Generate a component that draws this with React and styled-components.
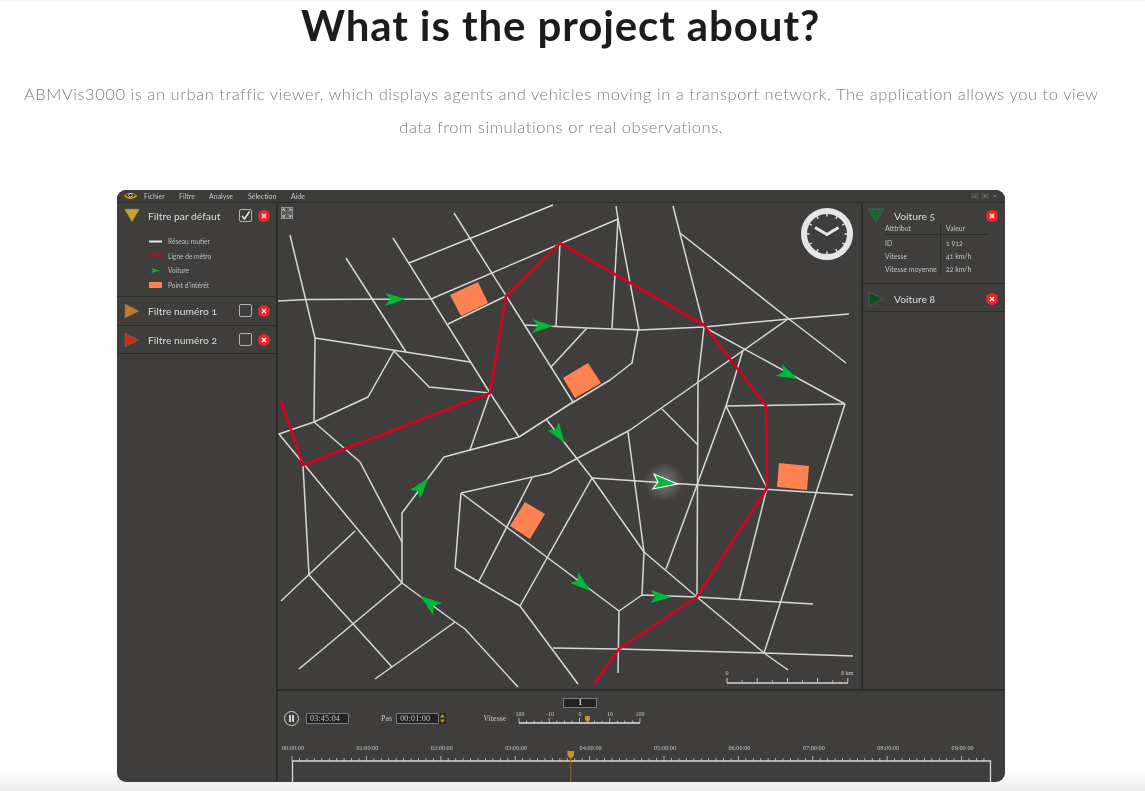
import React from 'react';
import styled, { createGlobalStyle } from 'styled-components';

const GlobalStyle = createGlobalStyle`
  html, body {
    margin: 0;
    padding: 0;
    background: #fff;
    overflow: hidden;
  }
`;

const ROADS = [
  'M278 301 L306 299.5 L431 299 L618 219',
  'M290 235 L315 338 L314 422',
  'M315 338 L470 362',
  'M346 258 L406 352',
  'M393 238 L490 393 L519 437',
  'M409 263 L553 205',
  'M454 213 L573 402',
  'M448 324 L506 296',
  'M394 351 L368 397 L314 422 L279 434 L402 583',
  'M394 351 L429 387 L490 393',
  'M314 422 L360 462 L402 542',
  'M490 393 L470 450',
  'M402 583 L402 513 L444 457 L519 437 L573 402',
  'M303 465 L309 575',
  'M281 601 L355 531',
  'M309 575 L392 667',
  'M299 669 L402 583',
  'M375 679 L455 622',
  'M402 583 L455 622 L465 629 L518 687',
  'M461 493 L550 473 L630 430 L660 409 L788 319',
  'M572 403 L610 380 L632 363 L638 330',
  'M461 493 L455 568 L520 606',
  'M461 493 L619 611',
  'M532 478 L479 581',
  'M592 478 L520 606',
  'M520 606 L578 684',
  'M553 648 L618 649 L764 653 L853 656',
  'M546 419 L592 478 L644 552 L697 597 L764 653 L788 670',
  'M592 478 L853 495',
  'M628 432 L644 552 L642 595 L619 611 L618 673',
  'M642 595 L697 597 L813 604',
  'M666 569 L697 485 L726 406 L743 350',
  'M697 597 L698 380 L704 327',
  'M662 409 L698 445',
  'M673 206 L704 327',
  'M680 233 L789 319 L846 363',
  'M525 325 L587 328 L639 330 L704 327 L789 319 L849 314',
  'M560 243 L556 326',
  'M616 206 L618 219 L639 330',
  'M618 219 L612 328',
  'M704 327 L845 404',
  'M726 406 L845 404',
  'M726 406 L767 488',
  'M845 404 L764 653',
  'M767 488 L739 600',
  'M587 328 L551 367',
];

const METRO = 'M281 401 L303 465 L490 393 L506 296 L560 243 L704 325 L766 406 L767 488 L697 597 L619 649 L594 684';

const SPOTS = [
  '450,295 478,282 488,303 461,316',
  '588,363 601,383 575,398 563,378',
  '525,502 545,514 530,539 510,526',
  '779,463 809,466 807,490 777,487',
];

const CARS = [
  '406,299 385,293 390,299 385,306',
  '553.7,326 532,319 538,326 532,333',
  '564.7,443 558.7,422 555.7,429.8 547.7,430',
  '797.7,379 782,364 783,372 776,376',
  '428.7,478 409.7,490 417.9,490.9 420,499',
  '420.3,596 442,603 433.7,606.1 433,615',
  '590.7,591 578,572 577.7,580.5 570,583',
  '671.7,597 650.7,590 655,597 650.7,603',
];

const TIMES = ['00:00:00', '01:00:00', '02:00:00', '03:00:00', '04:00:00', '05:00:00', '06:00:00', '07:00:00', '08:00:00', '09:00:00'];

const Page = styled.div`
  width: 1145px;
  height: 791px;
  overflow: hidden;
  background: linear-gradient(to bottom, #f4f4f4 0, #fff 3px, #fff 771px, #ebebeb 791px);
`;

const Section = styled.section`
  width: 1122px;
  display: flex;
  flex-direction: column;
  align-items: center;
`;

const Heading = styled.h1`
  margin: 0;
  height: 51px;
  font-family: 'Lato', sans-serif;
  font-weight: 700;
  font-size: 42px;
  line-height: 51px;
  letter-spacing: 0.9px;
  color: #1c1c1c;
  white-space: nowrap;
  will-change: transform;
`;

const Intro = styled.p`
  margin: 27px 0 46px;
  font-family: 'Lato', sans-serif;
  font-weight: 300;
  font-size: 16.5px;
  line-height: 33px;
  letter-spacing: 0.55px;
  color: #7c7c7c;
  text-align: center;
  white-space: nowrap;
  will-change: transform;
`;

const Window = styled.div`
  width: 888px;
  height: 592px;
  flex-shrink: 0;
  display: grid;
  grid-template-columns: 161px 1fr;
  grid-template-rows: 13px 1fr;
  background: #3f3e3d;
  border-radius: 9px;
  overflow: hidden;
  font-family: 'Lato', sans-serif;
`;

const MenuBar = styled.div`
  grid-column: 1 / 3;
  display: flex;
  align-items: center;
  background: #3c3b3a;
  border-bottom: 1px solid #2c2c2b;
  padding-left: 6px;
  will-change: transform;
`;

const MenuItem = styled.span`
  width: ${(p) => p.$width}px;
  font-size: 7px;
  color: #c4c4c4;
  white-space: nowrap;
`;

const WindowButtons = styled.div`
  margin-left: auto;
  margin-right: 6px;
  display: flex;
  gap: 2px;
`;

const WindowButton = styled.span`
  width: 8px;
  height: 6px;
  background: ${(p) => (p.$plain ? 'transparent' : '#4c4b4a')};
  color: #a0a0a0;
  font-size: 6px;
  line-height: 6px;
  text-align: center;
`;

const Sidebar = styled.aside`
  border-right: 2px solid #2c2c2b;
  will-change: transform;
`;

const FilterRow = styled.div`
  border-bottom: 1px solid #2c2c2b;
  padding: ${(p) => p.$top || 6}px 6px 0 7px;
  height: ${(p) => p.$height}px;
  box-sizing: border-box;
`;

const RowHead = styled.div`
  display: flex;
  align-items: center;
  height: 15px;
`;

const RowTitle = styled.span`
  margin-left: ${(p) => p.$gap}px;
  font-size: 10.3px;
  font-variant-numeric: oldstyle-nums;
  color: #dcdcdc;
  white-space: nowrap;
`;

const CheckBox = styled.span`
  margin-left: auto;
  width: 13px;
  height: 13px;
  border: 1px solid #b4b4b4;
  border-radius: 2px;
  box-sizing: border-box;
  display: flex;
  align-items: center;
  justify-content: center;
`;

const CloseDot = styled.span`
  margin-left: ${(p) => (p.$push ? 'auto' : '6px')};
  width: 12px;
  height: 12px;
  border-radius: 50%;
  background: #f2242b;
  flex-shrink: 0;
  display: flex;
  align-items: center;
  justify-content: center;
`;

const Legend = styled.ul`
  list-style: none;
  margin: 11px 0 0 25px;
  padding: 0;
  display: grid;
  grid-auto-rows: 14.5px;
`;

const LegendItem = styled.li`
  display: flex;
  align-items: center;
  gap: 6px;
  font-size: 6.6px;
  color: #bdbdbd;
`;

const Swatch = styled.span`
  width: 13px;
  display: flex;
  align-items: center;
  justify-content: center;
`;

const Stage = styled.div`
  display: flex;
  flex-direction: column;
  min-width: 0;
`;

const TopArea = styled.div`
  display: grid;
  grid-template-columns: 583px 1fr;
  height: 486px;
  border-bottom: 2px solid #2c2c2b;
`;

const MapSvg = styled.svg`
  display: block;
  width: 583px;
  height: 486px;
`;

const Details = styled.aside`
  border-left: 2px solid #2c2c2b;
  will-change: transform;
`;

const VehicleRow = styled.div`
  border-bottom: 1px solid #2c2c2b;
  height: ${(p) => p.$height}px;
  box-sizing: border-box;
  padding: ${(p) => p.$top}px 7px 0 5px;
`;

const AttrTable = styled.div`
  display: grid;
  grid-template-columns: 55px 48px;
  margin: 1px 0 0 17px;
  font-size: 6.9px;
  font-variant-numeric: oldstyle-nums;
  color: #c4c4c4;
`;

const AttrCell = styled.div`
  height: ${(p) => (p.$head ? 10 : 13)}px;
  line-height: ${(p) => (p.$head ? 9 : 16)}px;
  padding-left: ${(p) => (p.$value ? 5 : 0)}px;
  border-left: ${(p) => (p.$value ? '1px solid #2c2c2b' : 'none')};
  border-bottom: ${(p) => (p.$head ? '1px solid #2c2c2b' : 'none')};
  white-space: nowrap;
`;

const Controls = styled.div`
  flex: 1;
  display: flex;
  flex-direction: column;
  font-family: 'Liberation Serif', serif;
  color: #c9c9c9;
  will-change: transform;
`;

const PlayRow = styled.div`
  display: flex;
  align-items: flex-start;
  padding: 7px 0 0 6px;
  height: 52px;
  box-sizing: border-box;
`;

const PauseButton = styled.span`
  width: 15px;
  height: 15px;
  margin-top: 13px;
  border: 1.5px solid #cfcfcf;
  border-radius: 50%;
  box-sizing: border-box;
  display: flex;
  align-items: center;
  justify-content: center;
  gap: 1.5px;
`;

const PauseBar = styled.span`
  width: 2px;
  height: 7px;
  background: #cfcfcf;
`;

const TimeBox = styled.span`
  margin-top: 15px;
  margin-left: ${(p) => p.$left}px;
  width: ${(p) => p.$width}px;
  height: 11px;
  border: 1px solid #7c7c7c;
  border-radius: 1px;
  box-sizing: border-box;
  background: #222222;
  font-size: 8px;
  line-height: 9px;
  padding-left: 3px;
  color: #c9c9c9;
  letter-spacing: 0.2px;
`;

const FieldLabel = styled.span`
  margin-top: 15px;
  margin-left: ${(p) => p.$left}px;
  font-size: 8px;
  line-height: 11px;
  color: #c9c9c9;
`;

const Stepper = styled.svg`
  margin-top: 15px;
  display: block;
`;

const SpeedBlock = styled.div`
  margin-left: 12px;
  width: 134px;
  display: flex;
  flex-direction: column;
`;

const SpeedValue = styled.span`
  margin-left: 45px;
  width: 34px;
  height: 10px;
  border: 1px solid #7c7c7c;
  box-sizing: border-box;
  background: #222222;
  font-size: 8px;
  line-height: 8px;
  font-weight: 700;
  text-align: center;
  color: #d4d4d4;
`;

const RulerSvg = styled.svg`
  display: block;
  overflow: visible;
`;

function Triangle({ color, dir }) {
  const shapes = {
    down: '0.5,1 15.5,1 8,14',
    right: '1,1 15,8 1,15',
  };
  return (
    <svg width="16" height="16" viewBox="0 0 16 16">
      <polygon points={shapes[dir]} fill={color} stroke="#6f6f6c" strokeWidth="0.5" />
    </svg>
  );
}

function Close({ push }) {
  return (
    <CloseDot $push={push}>
      <svg width="6" height="6" viewBox="0 0 6 6">
        <path d="M1 1 L5 5 M5 1 L1 5" stroke="#fff" strokeWidth="1.2" />
      </svg>
    </CloseDot>
  );
}

function Clock() {
  const ticks = [];
  for (let i = 0; i < 12; i += 1) {
    ticks.push(
      <line
        key={i}
        x1="827"
        y1="212"
        x2="827"
        y2="216.5"
        stroke="#e6e6e6"
        strokeWidth="1.4"
        transform={`rotate(${i * 30} 827 234)`}
      />,
    );
  }
  return (
    <g>
      <circle cx="827" cy="234" r="23" fill="none" stroke="#e6e6e6" strokeWidth="6" />
      {ticks}
      <path d="M815 227.5 L827 234.5 L838.5 227.5" fill="none" stroke="#e6e6e6" strokeWidth="3" />
    </g>
  );
}

function ScaleBar() {
  const ticks = [];
  for (let i = 0; i <= 8; i += 1) {
    const x = 727 + i * 15.1;
    const tall = i % 2 === 0;
    ticks.push(<line key={i} x1={x} x2={x} y1={tall ? 678 : 680} y2="683" stroke="#cfcfcf" strokeWidth={tall ? 1 : 0.7} />);
  }
  return (
    <g>
      <line x1="727" x2="848" y1="683" y2="683" stroke="#d6d6d6" strokeWidth="1.3" />
      {ticks}
      <text x="725.5" y="675" fontFamily="Liberation Serif" fontSize="6" fill="#c9c9c9">0</text>
      <text x="841" y="675" fontFamily="Liberation Serif" fontSize="6" fill="#c9c9c9">8 km</text>
    </g>
  );
}

function TrafficMap() {
  return (
    <MapSvg viewBox="278 203 583 486">
      <defs>
        <radialGradient id="glow">
          <stop offset="0%" stopColor="#fff" stopOpacity="0.32" />
          <stop offset="100%" stopColor="#fff" stopOpacity="0" />
        </radialGradient>
      </defs>
      <g fill="none" stroke="#d8d8d6" strokeWidth="1.5" strokeLinejoin="round">
        {ROADS.map((d) => (
          <path key={d} d={d} />
        ))}
      </g>
      <path d={METRO} fill="none" stroke="#d9001b" strokeWidth="2.6" strokeLinejoin="round" />
      {SPOTS.map((p) => (
        <polygon key={p} points={p} fill="#ff8352" />
      ))}
      {CARS.map((p) => (
        <polygon key={p} points={p} fill="#00b838" />
      ))}
      <circle cx="664" cy="482" r="20" fill="url(#glow)" />
      <polygon points="677.3,484 654,474 658,482 652.7,489" fill="#00b838" stroke="#fff" strokeWidth="1.1" />
      <rect x="281.5" y="207.5" width="11" height="11" fill="#5c5b5a" stroke="#9c9c9c" strokeWidth="0.9" />
      <g fill="none" stroke="#d0d0d0" strokeWidth="0.8">
        <path d="M283 211 V209 H285 M283 209 L285.5 211.5" />
        <path d="M291 211 V209 H289 M291 209 L288.5 211.5" />
        <path d="M283 215 V217 H285 M283 217 L285.5 214.5" />
        <path d="M291 215 V217 H289 M291 217 L288.5 214.5" />
      </g>
      <Clock />
      <ScaleBar />
    </MapSvg>
  );
}

function SpeedRuler() {
  const ticks = [];
  for (let i = 0; i <= 16; i += 1) {
    const x = 1 + i * 7.56;
    const tall = i % 4 === 0;
    ticks.push(<line key={i} x1={x} x2={x} y1={tall ? 3 : 5.5} y2="8" stroke="#cfcfcf" strokeWidth="0.8" />);
  }
  const labels = [
    ['100', 2],
    ['-10', 32],
    ['0', 62],
    ['10', 92],
    ['100', 122],
  ];
  return (
    <RulerSvg width="134" height="15" viewBox="0 -7 134 15">
      {labels.map(([t, x]) => (
        <text key={x} x={x} y="1" textAnchor="middle" fontFamily="Liberation Serif" fontSize="6" fill="#c9c9c9">{t}</text>
      ))}
      {ticks}
      <line x1="1" x2="122" y1="8" y2="8" stroke="#e2e2e2" strokeWidth="1.4" />
      <polygon points="67,1 72,1 72,4.5 69.5,7.5 67,4.5" fill="#c8951e" />
    </RulerSvg>
  );
}

function TimelineRuler() {
  const ticks = [];
  for (let i = 0; i <= 93; i += 1) {
    const x = 14 + i * 7.44;
    const tall = i % 10 === 0;
    ticks.push(<line key={i} x1={x} x2={x} y1={tall ? 13 : 15} y2="18" stroke="#cfcfcf" strokeWidth="0.8" />);
  }
  return (
    <RulerSvg width="727" height="39" viewBox="0 0 727 39">
      {TIMES.map((t, i) => (
        <text key={t} x={15 + i * 74.4} y="7" textAnchor="middle" fontFamily="Liberation Serif" fontSize="6.2" fill="#c4c4c4">{t}</text>
      ))}
      {ticks}
      <path d="M14.5 39 V18 H712.5 V39" fill="none" stroke="#d8d8d8" strokeWidth="1.3" />
      <line x1="292.8" x2="292.8" y1="14" y2="39" stroke="#8a6a1e" strokeWidth="1" />
      <polygon points="289.5,8 296,8 296,12.5 292.8,16 289.5,12.5" fill="#c8951e" />
    </RulerSvg>
  );
}

export default function App() {
  return (
    <Page>
      <GlobalStyle />
      <Section>
        <Heading>What is the project about?</Heading>
        <Intro>
          ABMVis3000 is an urban traffic viewer, which displays agents and vehicles moving in a transport network. The application allows you to view
          <br />
          data from simulations or real observations.
        </Intro>
        <Window>
          <MenuBar>
            <MenuItem $width={21}>
              <svg width="15" height="10" viewBox="0 0 15 10">
                <path d="M0.5 5 Q7.5 -1.5 14.5 5 Q7.5 11.5 0.5 5 Z" fill="#c99a16" />
                <path d="M2.5 4.6 Q7.5 0.5 12.5 4.6 Q7.5 7.8 2.5 4.6 Z" fill="#2a2926" />
                <circle cx="7.5" cy="4.2" r="2.1" fill="#d8d2b8" />
                <circle cx="7.5" cy="4.2" r="1.2" fill="#1f1e1c" />
              </svg>
            </MenuItem>
            <MenuItem $width={35}>Fichier</MenuItem>
            <MenuItem $width={30}>Filtre</MenuItem>
            <MenuItem $width={39}>Analyse</MenuItem>
            <MenuItem $width={43}>Sélection</MenuItem>
            <MenuItem $width={30}>Aide</MenuItem>
            <WindowButtons>
              <WindowButton>–</WindowButton>
              <WindowButton>▫</WindowButton>
              <WindowButton $plain>×</WindowButton>
            </WindowButtons>
          </MenuBar>
          <Sidebar>
            <FilterRow $height={94} $top={5}>
              <RowHead>
                <Triangle color="#c9a227" dir="down" />
                <RowTitle $gap={8}>Filtre par défaut</RowTitle>
                <CheckBox>
                  <svg width="11" height="11" viewBox="0 0 11 11">
                    <path d="M2 6 L4.5 9 L9.5 1.5" fill="none" stroke="#f0f0f0" strokeWidth="1.4" />
                  </svg>
                </CheckBox>
                <Close />
              </RowHead>
              <Legend>
                <LegendItem>
                  <Swatch>
                    <svg width="13" height="3"><rect width="13" height="2" y="0.5" fill="#e6e6e6" /></svg>
                  </Swatch>
                  Réseau routier
                </LegendItem>
                <LegendItem>
                  <Swatch>
                    <svg width="13" height="3"><rect width="13" height="2" y="0.5" fill="#d4001b" /></svg>
                  </Swatch>
                  Ligne de métro
                </LegendItem>
                <LegendItem>
                  <Swatch>
                    <svg width="9" height="5"><polygon points="0,0 9,2.5 0,5 2,2.5" fill="#00b838" /></svg>
                  </Swatch>
                  Voiture
                </LegendItem>
                <LegendItem>
                  <Swatch>
                    <svg width="13" height="6"><rect width="13" height="6" fill="#ff8352" /></svg>
                  </Swatch>
                  Point d’intérêt
                </LegendItem>
              </Legend>
            </FilterRow>
            <FilterRow $height={29}>
              <RowHead>
                <Triangle color="#c47a25" dir="right" />
                <RowTitle $gap={8}>Filtre numéro 1</RowTitle>
                <CheckBox />
                <Close />
              </RowHead>
            </FilterRow>
            <FilterRow $height={28}>
              <RowHead>
                <Triangle color="#c9301c" dir="right" />
                <RowTitle $gap={8}>Filtre numéro 2</RowTitle>
                <CheckBox />
                <Close />
              </RowHead>
            </FilterRow>
          </Sidebar>
          <Stage>
            <TopArea>
              <TrafficMap />
              <Details>
                <VehicleRow $height={81} $top={5}>
                  <RowHead>
                    <Triangle color="#0f6b2c" dir="down" />
                    <RowTitle $gap={10}>Voiture 5</RowTitle>
                    <Close push />
                  </RowHead>
                  <AttrTable>
                    <AttrCell $head>Atttribut</AttrCell>
                    <AttrCell $head $value>Valeur</AttrCell>
                    <AttrCell>ID</AttrCell>
                    <AttrCell $value>1 912</AttrCell>
                    <AttrCell>Vitesse</AttrCell>
                    <AttrCell $value>41 km/h</AttrCell>
                    <AttrCell>Vitesse moyenne</AttrCell>
                    <AttrCell $value>22 km/h</AttrCell>
                  </AttrTable>
                </VehicleRow>
                <VehicleRow $height={28} $top={7}>
                  <RowHead>
                    <Triangle color="#0c4a20" dir="right" />
                    <RowTitle $gap={10}>Voiture 8</RowTitle>
                    <Close push />
                  </RowHead>
                </VehicleRow>
              </Details>
            </TopArea>
            <Controls>
              <PlayRow>
                <PauseButton>
                  <PauseBar />
                  <PauseBar />
                </PauseButton>
                <TimeBox $left={7} $width={43}>03:45:04</TimeBox>
                <FieldLabel $left={32}>Pas</FieldLabel>
                <TimeBox $left={4} $width={43}>00:01:00</TimeBox>
                <Stepper width="7" height="11" viewBox="0 0 7 11">
                  <rect width="7" height="11" fill="#2a2a2a" />
                  <polygon points="3.5,1 6,4.5 1,4.5" fill="#c8951e" />
                  <polygon points="3.5,10 6,6.5 1,6.5" fill="#c8951e" />
                </Stepper>
                <FieldLabel $left={37}>Vitesse</FieldLabel>
                <SpeedBlock>
                  <SpeedValue>1</SpeedValue>
                  <SpeedRuler />
                </SpeedBlock>
              </PlayRow>
              <TimelineRuler />
            </Controls>
          </Stage>
        </Window>
      </Section>
    </Page>
  );
}
